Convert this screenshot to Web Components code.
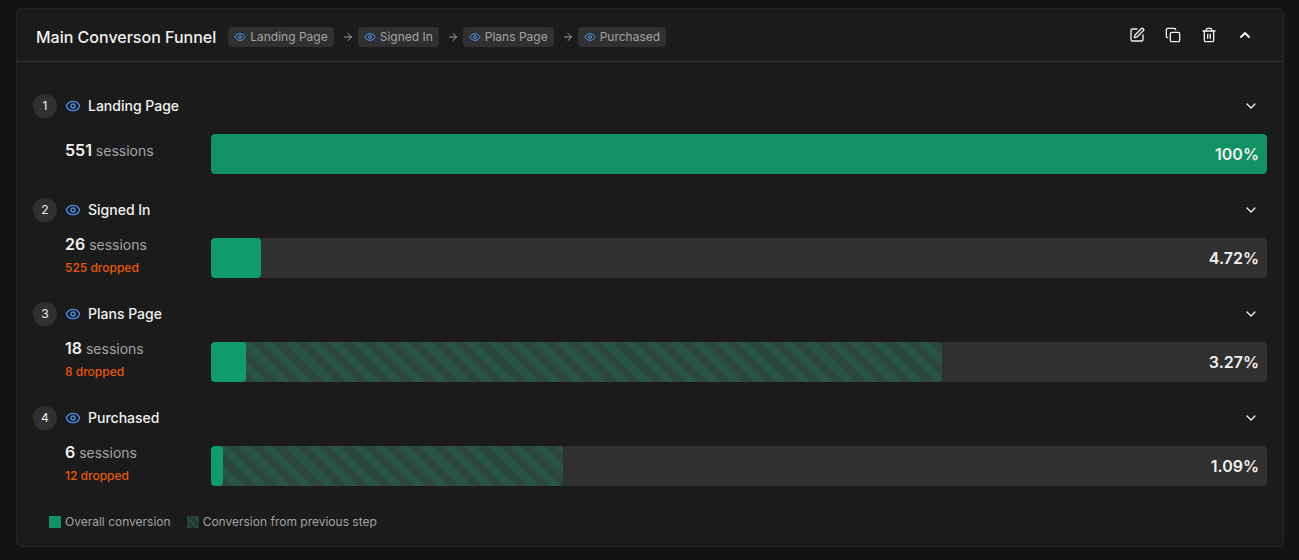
<!DOCTYPE html>
<html lang="en">
<head>
<meta charset="utf-8">
<title>Funnels</title>
<style>
  body {
    margin: 0;
    padding: 8px 15px 13px 16px;
    background: #131313;
    color: #f0f0f0;
    font-family: Inter, sans-serif;
    font-size: 14px;
    line-height: 20px;
  }
</style>
</head>
<body>
<funnel-card>
  <span slot="title">Main Converson Funnel</span>
  <funnel-path slot="path" steps="Landing Page|Signed In|Plans Page|Purchased"></funnel-path>
  <funnel-step number="1" name="Landing Page" sessions="551" percent="100" previous="0"></funnel-step>
  <funnel-step number="2" name="Signed In" sessions="26" dropped="525" percent="4.72" previous="0"></funnel-step>
  <funnel-step number="3" name="Plans Page" sessions="18" dropped="8" percent="3.27" previous="69.23"></funnel-step>
  <funnel-step number="4" name="Purchased" sessions="6" dropped="12" percent="1.09" previous="33.33"></funnel-step>
  <funnel-legend slot="legend"></funnel-legend>
</funnel-card>

<script>
const ICONS = {
  eye: '<path d="M2.062 12.348a1 1 0 0 1 0-.696 10.75 10.75 0 0 1 19.876 0 1 1 0 0 1 0 .696 10.75 10.75 0 0 1-19.876 0"/><circle cx="12" cy="12" r="3"/>',
  arrow: '<path d="M5 12h14"/><path d="m12 5 7 7-7 7"/>',
  edit: '<path d="M12 3H5a2 2 0 0 0-2 2v14a2 2 0 0 0 2 2h14a2 2 0 0 0 2-2v-7"/><path d="M18.375 2.625a1 1 0 0 1 3 3l-9.013 9.014a2 2 0 0 1-.853.505l-2.873.84a.5.5 0 0 1-.62-.62l.84-2.873a2 2 0 0 1 .506-.852z"/>',
  copy: '<rect width="14" height="14" x="8" y="8" rx="2"/><path d="M4 16c-1.1 0-2-.9-2-2V4c0-1.100.9-2 2-2h10c1.100 0 2 .9 2 2"/>',
  trash: '<path d="M3 6h18"/><path d="M19 6v14a2 2 0 0 1-2 2H7a2 2 0 0 1-2-2V6"/><path d="M8 6V4a2 2 0 0 1 2-2h4a2 2 0 0 1 2 2v2"/><path d="M10 11v6"/><path d="M14 11v6"/>',
  up: '<path d="m18 15-6-6-6 6"/>',
  down: '<path d="m6 9 6 6 6-6"/>'
};

class UiIcon extends HTMLElement {
  connectedCallback() {
    const size = this.getAttribute('size') || 16;
    this.attachShadow({ mode: 'open' }).innerHTML = `
      <style>
        :host { display: inline-flex; flex: none; }
        svg { display: block; fill: none; stroke: currentColor; stroke-linecap: round; stroke-linejoin: round; }
      </style>
      <svg width="${size}" height="${size}" viewBox="0 0 24 24" stroke-width="${this.getAttribute('weight') || 2}" aria-hidden="true">${ICONS[this.getAttribute('name')]}</svg>`;
  }
}
customElements.define('ui-icon', UiIcon);

class FunnelPath extends HTMLElement {
  connectedCallback() {
    const items = this.getAttribute('steps').split('|').map(name =>
      `<li><span class="chip"><ui-icon name="eye" size="12"></ui-icon>${name}</span></li>`);
    this.attachShadow({ mode: 'open' }).innerHTML = `
      <style>
        :host { display: block; color: #a3a3a3; font-size: 12px; line-height: 16px; }
        ol { display: flex; align-items: center; margin: 0; padding: 0; list-style: none; }
        li { display: flex; align-items: center; }
        .chip { display: flex; align-items: center; gap: 4px; padding: 2px 6px; border-radius: 4px; background: #303030; white-space: nowrap; }
        .chip ui-icon { color: #4a90e8; }
        .arrow { margin: 0 4px 0 8px; }
      </style>
      <ol>${items.join('<li class="arrow" aria-hidden="true"><ui-icon name="arrow" size="12"></ui-icon></li>')}</ol>`;
  }
}
customElements.define('funnel-path', FunnelPath);

class FunnelCard extends HTMLElement {
  connectedCallback() {
    this.attachShadow({ mode: 'open' }).innerHTML = `
      <style>
        :host { display: block; border: 1px solid #262626; border-radius: 6px; background: #1b1b1b; }
        header { display: flex; align-items: center; justify-content: space-between; gap: 16px; padding: 12px 20px 8px 19px; border-bottom: 1px solid #303030; }
        .heading { display: flex; align-items: center; gap: 12px; min-height: 32px; }
        h2 { margin: 0; font-size: 16px; line-height: 24px; font-weight: 500; white-space: nowrap; }
        .actions { display: flex; padding-bottom: 4px; }
        button { display: flex; align-items: center; justify-content: center; width: 36px; height: 28px; padding: 0; border: 0; background: none; color: inherit; }
        .steps { display: grid; gap: 24px; padding: 32px 16px 0; }
        footer { padding: 28px 32px 16px; }
      </style>
      <header>
        <div class="heading"><h2><slot name="title"></slot></h2><slot name="path"></slot></div>
        <div class="actions">
          <button type="button" aria-label="Edit"><ui-icon name="edit"></ui-icon></button>
          <button type="button" aria-label="Duplicate"><ui-icon name="copy"></ui-icon></button>
          <button type="button" aria-label="Delete"><ui-icon name="trash"></ui-icon></button>
          <button type="button" aria-label="Collapse"><ui-icon name="up" weight="3"></ui-icon></button>
        </div>
      </header>
      <div class="steps"><slot></slot></div>
      <footer><slot name="legend"></slot></footer>`;
  }
}
customElements.define('funnel-card', FunnelCard);

class FunnelStep extends HTMLElement {
  connectedCallback() {
    const a = name => this.getAttribute(name);
    this.attachShadow({ mode: 'open' }).innerHTML = `
      <style>
        :host { display: block; }
        .top { display: flex; align-items: center; height: 24px; }
        .number { display: flex; align-items: center; justify-content: center; width: 24px; height: 24px; margin-right: 8px; border-radius: 50%; background: #303030; font-size: 12px; }
        .top > ui-icon { color: #4a90e8; }
        h3 { flex: 1; margin: 0 0 0 7px; font-size: 14px; line-height: 20px; font-weight: 500; }
        button { display: flex; justify-content: center; width: 32px; padding: 0; border: 0; background: none; color: inherit; }
        .row { display: grid; grid-template: 40px / 146px 1fr; align-items: center; margin-top: 16px; padding-left: 32px; }
        .stats { padding-bottom: 6px; color: #a3a3a3; line-height: 24px; }
        .stats b { color: #f0f0f0; font-size: 16px; line-height: 16px; font-weight: 600; }
        .dropped { margin: 1px 0 -1px; color: #ea580c; font-size: 12px; line-height: 20px; font-weight: 500; }
        .bar { display: grid; align-items: center; height: 40px; border-radius: 4px; overflow: hidden; background: #303030; }
        .bar > * { grid-area: 1 / 1; }
        .fill, .previous { height: 40px; border-radius: 4px; }
        .fill { width: ${a('percent')}%; background: #0f9b6c; }
        :host([number="1"]) .fill { background: #109264; }
        .previous { width: ${a('previous')}%; background: repeating-linear-gradient(45deg, #285444 0 8px, #2d463e 8px 16px); }
        .percent { justify-self: end; padding-right: 8px; font-size: 16px; line-height: 24px; font-weight: 600; }
      </style>
      <div class="top">
        <span class="number">${a('number')}</span>
        <ui-icon name="eye"></ui-icon>
        <h3>${a('name')}</h3>
        <button type="button" aria-label="Expand ${a('name')}"><ui-icon name="down"></ui-icon></button>
      </div>
      <div class="row">
        <div class="stats">
          <div><b>${a('sessions')}</b> sessions</div>
          ${a('dropped') ? `<div class="dropped">${a('dropped')} dropped</div>` : ''}
        </div>
        <div class="bar">
          <div class="previous"></div>
          <div class="fill"></div>
          <span class="percent">${a('percent')}%</span>
        </div>
      </div>`;
  }
}
customElements.define('funnel-step', FunnelStep);

class FunnelLegend extends HTMLElement {
  connectedCallback() {
    this.attachShadow({ mode: 'open' }).innerHTML = `
      <style>
        :host { display: flex; gap: 16px; color: #a3a3a3; font-size: 12px; line-height: 16px; }
        span { display: flex; align-items: center; gap: 4px; }
        i { width: 12px; height: 12px; background: #109264; }
        .striped { background: repeating-linear-gradient(45deg, #27483c 0 3px, #2b3431 3px 6px); }
      </style>
      <span><i></i>Overall conversion</span>
      <span><i class="striped"></i>Conversion from previous step</span>`;
  }
}
customElements.define('funnel-legend', FunnelLegend);
</script>
</body>
</html>
